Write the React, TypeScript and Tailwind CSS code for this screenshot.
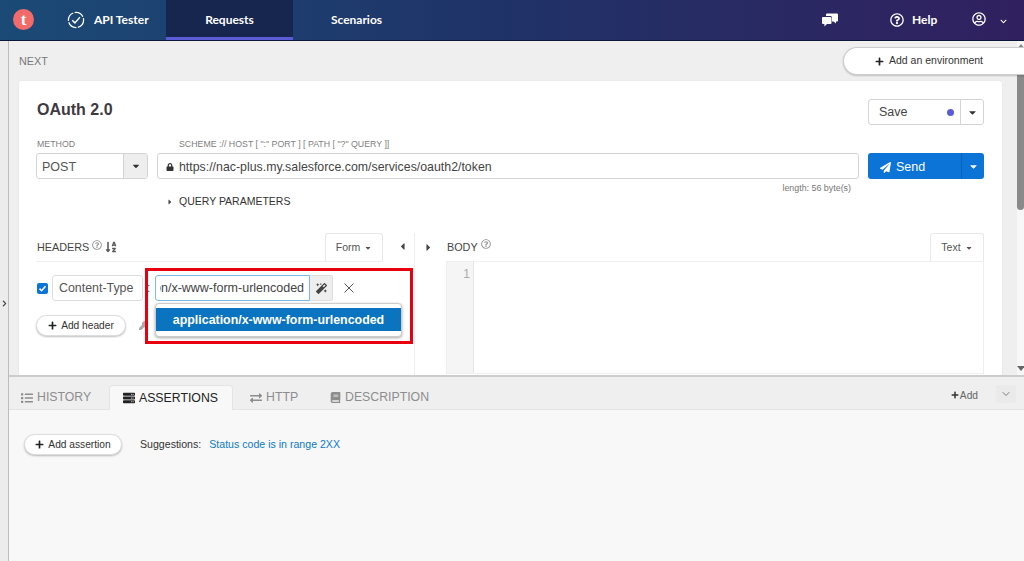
import {
  FaBook,
  FaCaretDown,
  FaCaretLeft,
  FaCaretRight,
  FaChevronDown,
  FaChevronRight,
  FaExchangeAlt,
  FaKey,
  FaList,
  FaLock,
  FaMagic,
  FaPaperPlane,
  FaPlus,
  FaRegQuestionCircle,
  FaRegUserCircle,
  FaServer,
  FaSortAlphaDown,
} from "react-icons/fa"
import { ChevronDown } from "lucide-react"
import { ReactNode } from "react"

const sans = "font-['Liberation_Sans',Arial,sans-serif]"

const Pill = ({ label, className }: { label: string; className: string }) => (
  <button
    className={`flex h-[21px] items-center justify-center gap-1 rounded-full border border-[#dddddd] bg-white text-[10.2px] text-[#333] shadow-[0_1px_2px_rgba(0,0,0,0.25)] ${className}`}
  >
    <FaPlus className="text-[9px] text-[#222]" />
    {label}
  </button>
)

const BottomTab = ({ icon, label, active, className }: { icon: ReactNode; label: string; active?: boolean; className: string }) => (
  <div
    className={`flex h-[25px] items-center gap-[4px] text-[12.3px] ${active ? "rounded-t border border-b-0 border-[#e4e4e4] bg-[#f8f8f8] pr-[1px] text-[#222]" : "pt-[2px] text-[#8d8d8d]"} ${className}`}
  >
    {icon}
    {label}
  </div>
)

const HeaderBar = () => (
  <header className="flex h-[41px] shrink-0 items-stretch border-b border-[#10163a] bg-gradient-to-r from-[#1b4a76] via-[#1f3268] to-[#30205f] font-['Lato',sans-serif] text-[12px] font-bold text-white">
    <div className="ml-[13px] mt-[9px] flex h-[21px] w-[21px] items-center justify-center rounded-full bg-[#f36a6a] font-['Liberation_Serif',serif] text-[17px] text-white">
      t
    </div>
    <svg viewBox="0 0 20 20" className="ml-[33px] mt-[11px] h-[18px] w-[18px]" fill="none" stroke="white" strokeWidth="1.4">
      <circle cx="10" cy="10" r="8.4" strokeDasharray="11 1.6" />
      <path d="M5.8 10.2l3 3 5.6-6.4" strokeWidth="1.6" />
    </svg>
    <span className="ml-[9px] flex w-[72px] items-center">API Tester</span>
    <div className="flex w-[127px] items-center justify-center border-b-[3px] border-[#5b5bd8] bg-[#16264f] pt-[3px]">Requests</div>
    <div className="flex w-[127px] items-center justify-center">Scenarios</div>
    <svg viewBox="0 0 16 14" className="ml-[402px] mt-[13px] h-[14px] w-[16px]" fill="white">
      <path d="M5 0.5h10a1 1 0 0 1 1 1v6a1 1 0 0 1-1 1h-1v2l-2.5-2H10V4.5a1.5 1.5 0 0 0-1.5-1.5H4V1.5a1 1 0 0 1 1-1z" />
      <path d="M1 4h7.5a1 1 0 0 1 1 1v5a1 1 0 0 1-1 1H5l-2.6 2.6V11H1a1 1 0 0 1-1-1V5a1 1 0 0 1 1-1z" />
    </svg>
    <FaRegQuestionCircle className="ml-[52px] mt-[13px] text-[14px]" />
    <span className="ml-[8px] flex items-center">Help</span>
    <FaRegUserCircle className="ml-[35px] mt-[12px] text-[14px]" />
    <FaChevronDown className="ml-[14px] mt-[18px] text-[7px]" />
  </header>
)

const App = () => {
  return (
    <div className={`flex h-[561px] w-[1024px] flex-col overflow-hidden bg-[#efefef] ${sans}`}>
      <HeaderBar />
      <div className="flex min-h-0 flex-1">
        {/* sidebar handle */}
        <div className="flex w-[9px] shrink-0 items-start border-r border-[#bdbdbd] bg-[#ececec] pt-[259px] text-[#444]">
          <FaChevronRight className="ml-[1px] text-[7px]" />
        </div>

        <div className="flex min-w-0 flex-1 flex-col">
          <div className="relative flex h-[334px] shrink-0 overflow-hidden">
            <div className="min-w-0 flex-1 pl-[10px] pr-[15px]">
              <div className="flex h-[40px] items-center text-[10.8px] text-[#777]">NEXT</div>
              <div className="h-[300px] rounded-t-[3px] bg-white pl-[17px] pr-[18px] pt-[18px] shadow-[0_0_2px_rgba(0,0,0,0.08)]">
                <div className="flex h-[26px] justify-between">
                  <h1 className="ml-[1px] text-[16px] font-bold leading-[22px] text-[#3f3a40]">OAuth 2.0</h1>
                  <div className="flex w-[116px] rounded-[3px] border border-[#d4d4d4] text-[12.5px] text-[#444]">
                    <div className="flex flex-1 items-center justify-between border-r border-[#d4d4d4] pl-[10px] pr-[6px]">
                      Save
                      <span className="h-[7px] w-[7px] rounded-full bg-[#5b5bd8]" />
                    </div>
                    <div className="flex w-[22px] items-center justify-center text-[#333]">
                      <FaCaretDown className="text-[11px]" />
                    </div>
                  </div>
                </div>

                <div className="mt-[14px] flex h-[12px] items-center text-[8.8px] text-[#808080]">
                  <span className="w-[143px] pl-[1px]">METHOD</span>
                  <span>SCHEME :// HOST [ ":" PORT ] [ PATH [ "?" QUERY ]]</span>
                </div>
                <div className="mt-[2px] flex h-[26px] gap-[9px]">
                  <div className="flex w-[112px] overflow-hidden rounded-[3px] border border-[#d4d4d4] text-[12.5px] text-[#555]">
                    <span className="flex flex-1 items-center pl-[5px] pt-[2px]">POST</span>
                    <span className="flex w-[24px] items-center justify-center border-l border-[#d4d4d4] bg-[#eeeeee] text-[#333]">
                      <FaCaretDown className="text-[10px]" />
                    </span>
                  </div>
                  <div className="flex w-[702px] items-center rounded-[3px] border border-[#d4d4d4] pl-[8px] pt-[2px] text-[12.35px] text-[#444]">
                    <FaLock className="mr-[5px] text-[8px] text-[#333]" />
                    https://nac-plus.my.salesforce.com/services/oauth2/token
                  </div>
                  <div className="flex w-[116px] rounded-[3px] bg-[#0b74d6] text-[12.5px] text-white">
                    <div className="flex flex-1 items-center gap-[5px] border-r border-[#0a65bb] pl-[12px] pt-[2px]">
                      <FaPaperPlane className="text-[11px]" />
                      Send
                    </div>
                    <div className="flex w-[22px] items-center justify-center">
                      <FaCaretDown className="text-[11px]" />
                    </div>
                  </div>
                </div>
                <div className="mt-[4px] h-[10px] pr-[133px] text-right text-[8.9px] leading-[10px] text-[#777]">length: 56 byte(s)</div>
                <div className="mt-[3px] flex h-[12px] items-center pl-[130px] text-[10.5px] text-[#333]">
                  <FaCaretRight className="mr-[5px] text-[8px] text-[#444]" />
                  QUERY PARAMETERS
                </div>

                <div className="mt-[25px] flex h-[200px]">
                  {/* headers column */}
                  <div className="h-full w-[379px] shrink-0 border-r border-[#eeeeee]">
                    <div className="flex h-[29px]">
                      <div className="flex w-[347px] items-center border-b border-[#eeeeee] pl-[1px] text-[10.8px] text-[#444]">
                        <span>HEADERS</span>
                        <FaRegQuestionCircle className="mb-[5px] ml-[3px] text-[10px] text-[#999]" />
                        <FaSortAlphaDown className="ml-[3px] text-[12px] text-[#555]" />
                        <div className="ml-auto flex h-full w-[58px] items-center justify-center gap-[4px] rounded-t-[3px] border border-b-0 border-[#e8e8e8] text-[10.5px] text-[#555]">
                          Form
                          <FaCaretDown className="text-[8px]" />
                        </div>
                      </div>
                      <FaCaretLeft className="ml-[14px] mt-[8px] text-[11px] text-[#444]" />
                    </div>
                    <div className="mt-[13px] flex h-[26px] items-center">
                      <span className="ml-[1px] flex h-[11px] w-[11px] items-center justify-center rounded-[2px] bg-[#0b74d6]">
                        <svg viewBox="0 0 12 12" className="h-[9px] w-[9px]" fill="none" stroke="white" strokeWidth="2">
                          <path d="M2 6.2l2.8 2.8L10 3" />
                        </svg>
                      </span>
                      <div className="ml-[4px] flex h-full w-[91px] items-center rounded-[3px] border border-[#dddddd] pl-[6px] text-[12.4px] text-[#555]">
                        Content-Type
                      </div>
                      <span className="ml-[4px] text-[12px] text-[#555]">:</span>
                    </div>
                    <div className="mt-[14px] flex items-center">
                      <Pill label="Add header" className="w-[90px]" />
                      <FaKey className="ml-[13px] text-[9px] text-[#aaa]" />
                    </div>
                  </div>

                  {/* body column */}
                  <div className="min-w-0 flex-1">
                    <div className="flex h-[28px] items-center text-[10.8px] text-[#444]">
                      <FaCaretRight className="ml-[8px] text-[11px]" />
                      <span className="ml-[13px]">BODY</span>
                      <FaRegQuestionCircle className="mb-[7px] ml-[3px] text-[10px] text-[#999]" />
                      <div className="ml-auto flex h-full w-[54px] items-center justify-center gap-[4px] rounded-t-[3px] border border-b-0 border-[#e8e8e8] text-[10.5px] text-[#555]">
                        Text
                        <FaCaretDown className="text-[8px]" />
                      </div>
                    </div>
                    <div className="ml-[31px] flex h-[113px] border border-[#eeeeee]">
                      <div className="w-[27px] border-r border-[#e4e4e4] bg-[#f5f5f5] pr-[3px] pt-[3px] text-right text-[12px] text-[#aaa]">1</div>
                    </div>
                  </div>
                </div>
              </div>
            </div>

            {/* scrollbar */}
            <div className="flex w-[7px] shrink-0 flex-col items-center bg-[#f7f7f7]">
              <span className="mt-[3px] h-0 w-0 border-x-[4px] border-b-[5px] border-x-transparent border-b-[#888]" />
              <span className="mt-[5px] h-[156px] w-full rounded-full bg-[#8a8a8a]" />
              <span className="mt-auto mb-[4px] h-0 w-0 border-x-[4px] border-t-[5px] border-x-transparent border-t-[#666]" />
            </div>

            <div className="absolute left-[834px] top-[6px] flex h-[28px] w-[190px] items-center rounded-l-full border border-r-0 border-[#cccccc] bg-white pl-[31px] text-[10.5px] text-[#333] shadow-[0_1px_2px_rgba(0,0,0,0.2)]">
              <FaPlus className="mr-[5px] text-[9px] text-[#222]" />
              Add an environment
            </div>

            {/* value input + suggestion list over the headers row */}
            <div className="absolute left-[146px] top-[234px] flex h-[26px] items-center">
              <div className="flex h-full w-[155px] items-center rounded-l-[3px] border border-[#7ab8e8] bg-white px-[4px] text-[12.5px] text-[#444]">
                <div className="w-full overflow-hidden">
                  <span className="-ml-[6px] block whitespace-nowrap">on/x-www-form-urlencoded</span>
                </div>
              </div>
              <div className="flex h-full w-[23px] items-center justify-center rounded-r-[3px] border border-l-0 border-[#dddddd] bg-[#eeeeee] text-[#444]">
                <FaMagic className="text-[11px]" />
              </div>
              <svg viewBox="0 0 10 10" className="ml-[11px] h-[10px] w-[10px]" fill="none" stroke="#555" strokeWidth="1">
                <path d="M0.5 0.5l9 9M9.5 0.5l-9 9" />
              </svg>
            </div>
            <div className="absolute left-[146px] top-[262px] h-[34px] w-[247px] rounded-[4px] border border-[#cccccc] bg-white pt-[4px] shadow-[0_1px_3px_rgba(0,0,0,0.35)]">
              <div className="flex h-[23px] items-center justify-center bg-[#0b74c0] pt-[1px] text-[12.4px] font-bold text-white">
                application/x-www-form-urlencoded
              </div>
            </div>
            <div className="absolute left-[136px] top-[227px] h-[76px] w-[268px] border-[3px] border-[#e8000f]" />
          </div>

          {/* bottom panel */}
          <div className="flex min-h-0 flex-1 flex-col border-t-2 border-[#cccccc]">
            <div className="flex h-[33px] shrink-0 items-end border-b border-[#e4e4e4]">
              <BottomTab icon={<FaList className="text-[12px]" />} label="HISTORY" className="ml-[12px] w-[88px]" />
              <BottomTab
                icon={<FaServer className="text-[12px]" />}
                label="ASSERTIONS"
                active
                className="-mb-px w-[124px] justify-center"
              />
              <BottomTab icon={<FaExchangeAlt className="text-[12px]" />} label="HTTP" className="ml-[17px] w-[80px]" />
              <BottomTab icon={<FaBook className="text-[11px]" />} label="DESCRIPTION" className="w-[120px]" />
              <div className="mb-[6px] ml-auto flex items-center gap-[1px] text-[10.2px] text-[#666]">
                <FaPlus className="text-[8px] text-[#333]" />
                Add
              </div>
              <div className="mb-[6px] ml-[18px] mr-[8px] flex h-[18px] w-[20px] items-center justify-center rounded-[3px] bg-[#eaeaea] text-[#555]">
                <ChevronDown size={12} strokeWidth={1.5} />
              </div>
            </div>
            <div className="flex flex-1 items-start bg-[#f8f8f8] pl-[15px] pt-[24px] text-[10.6px]">
              <Pill label="Add assertion" className="w-[98px]" />
              <span className="ml-[18px] mt-[3px] text-[#333]">Suggestions:</span>
              <span className="ml-[8px] mt-[3px] text-[#0b78c8]">Status code is in range 2XX</span>
            </div>
          </div>
        </div>
      </div>
    </div>
  )
}

export default App
